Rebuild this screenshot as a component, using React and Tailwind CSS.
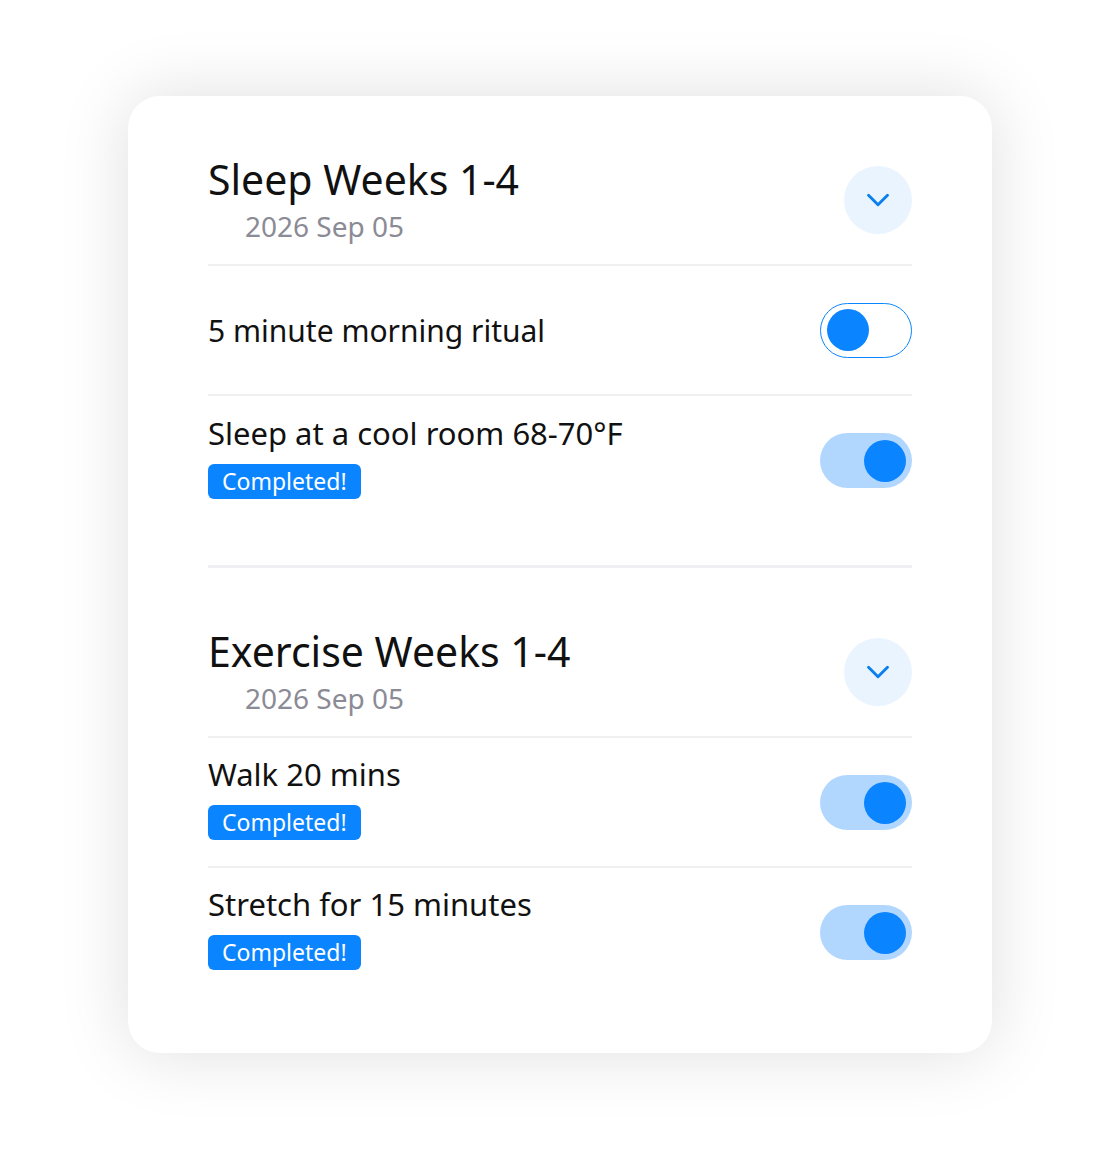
import React from "react";
import { ChevronDown } from "lucide-react";

const font = { fontFamily: "'Noto Sans', 'Open Sans', sans-serif" };

function Toggle({ on }) {
  if (on) {
    return (
      <div className="w-[92px] h-[55px] rounded-full bg-[#b2d7ff] flex items-center justify-end pr-[6px] shrink-0">
        <div className="w-[42px] h-[42px] rounded-full bg-[#0a84ff]" />
      </div>
    );
  }
  return (
    <div className="w-[92px] h-[55px] rounded-full border-[1.5px] border-[#0a84ff] bg-white flex items-center pl-[6px] shrink-0">
      <div className="w-[42px] h-[42px] rounded-full bg-[#0a84ff]" />
    </div>
  );
}

function Badge() {
  return (
    <div className="mt-[11px] inline-flex items-center h-[35px] px-[14px] rounded-[6px] bg-[#0a84ff] text-white text-[23px] leading-none">
      Completed!
    </div>
  );
}

function Header({ title, date }) {
  return (
    <div className="flex items-center justify-between pt-[61px] pb-[22px]">
      <div>
        <div className="text-[41px] leading-[44px] text-[#111]">{title}</div>
        <div className="mt-[9px] pl-[37px] text-[28px] leading-[32px] text-[#8b8b96]">{date}</div>
      </div>
      <div className="w-[68px] h-[68px] rounded-full bg-[#eaf4fe] flex items-center justify-center">
        <ChevronDown size={38} strokeWidth={1.8} className="text-[#0a7ff0]" />
      </div>
    </div>
  );
}

function Divider({ thick }) {
  return <div className={thick ? "h-[3px] bg-[#f0f0f2]" : "h-[2px] bg-[#f0f0f2]"} />;
}

function Task({ label, pb }) {
  return (
    <div className={`flex items-start justify-between pt-[16px] ${pb}`}>
      <div>
        <div className="text-[31px] leading-[40px] text-[#111]">{label}</div>
        <Badge />
      </div>
      <div className="mt-[21px]">
        <Toggle on />
      </div>
    </div>
  );
}

export default function App() {
  return (
    <div className="min-h-[1160px] bg-white flex justify-center pt-[96px]" style={font}>
      <div className="w-[864px] h-[957px] rounded-[32px] bg-white shadow-[0_0_70px_rgba(0,0,0,0.13)] px-[80px]">
        <Header title="Sleep Weeks 1-4" date="2026 Sep 05" />
        <Divider />
        <div className="h-[128px] flex items-center justify-between">
          <div className="text-[30px] leading-[40px] text-[#111] mt-[2px]">5 minute morning ritual</div>
          <Toggle />
        </div>
        <Divider />
        <div className="flex items-start justify-between pt-[17px] pb-[66px]">
          <div>
            <div className="text-[31px] leading-[40px] text-[#111]">Sleep at a cool room 68-70°F</div>
            <Badge />
          </div>
          <div className="mt-[20px]">
            <Toggle on />
          </div>
        </div>
        <Divider thick />
        <Header title="Exercise Weeks 1-4" date="2026 Sep 05" />
        <Divider />
        <Task label="Walk 20 mins" pb="pb-[26px]" />
        <Divider />
        <Task label="Stretch for 15 minutes" pb="pb-[82px]" />
      </div>
    </div>
  );
}
